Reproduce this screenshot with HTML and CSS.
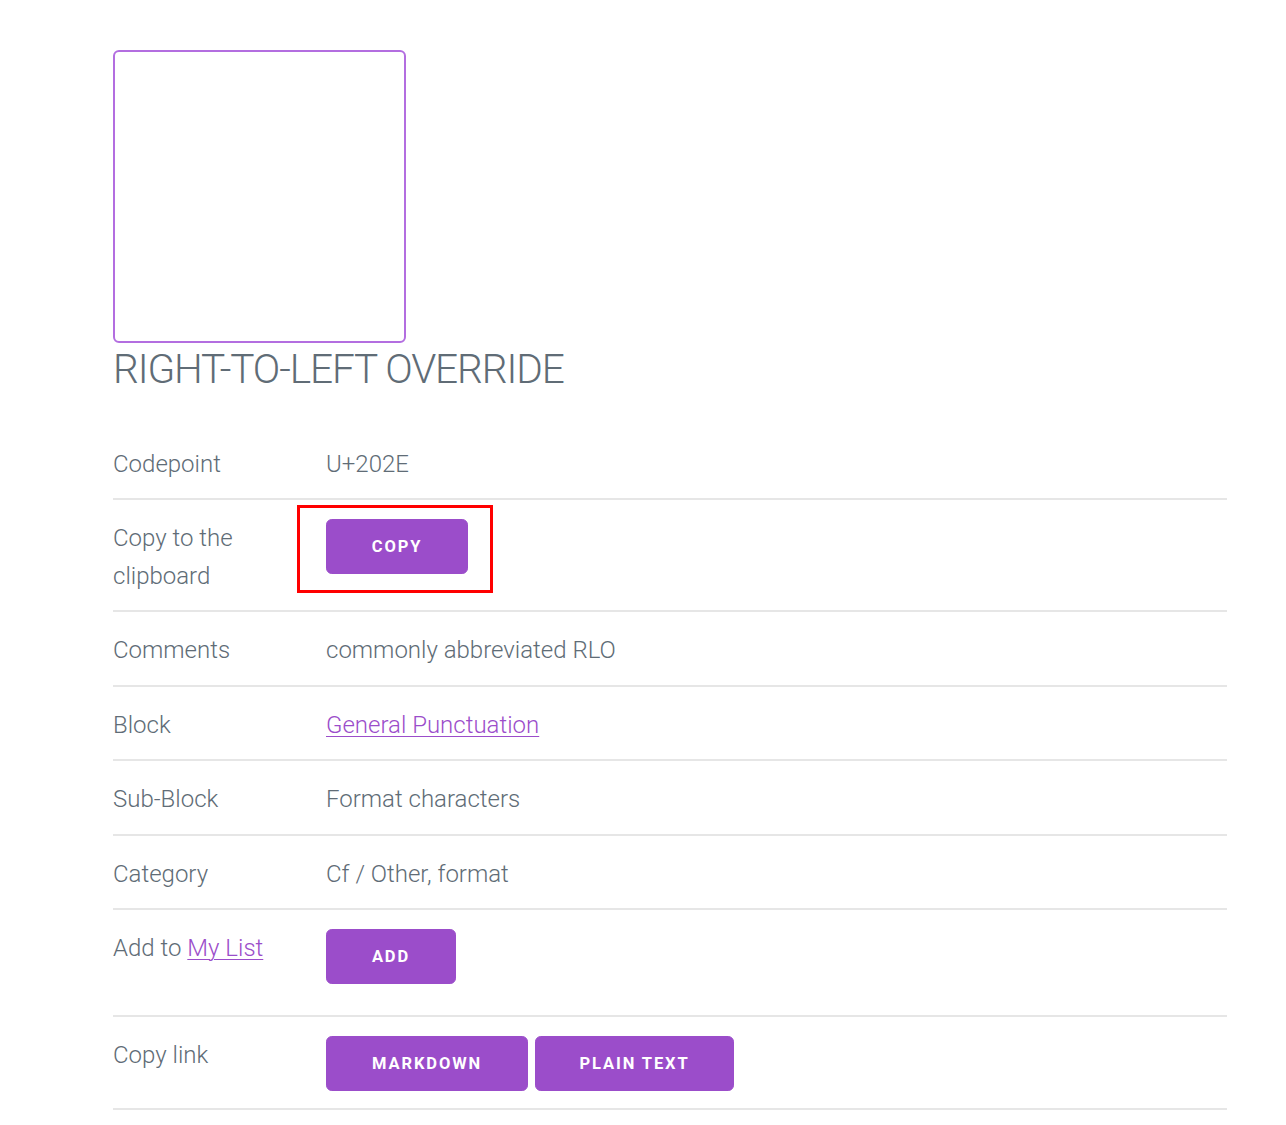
FILE: index.html
```html
<!DOCTYPE html>
<html lang="en">
<head>
<meta charset="utf-8">
<title>RIGHT-TO-LEFT OVERRIDE</title>
<link rel="stylesheet" href="styles.css">
</head>
<body>
<main class="page">
  <div class="glyph-box">&#x202E;</div>
  <h3 class="title">RIGHT-TO-LEFT OVERRIDE</h3>
  <table class="info">
    <tbody>
      <tr>
        <td class="label">Codepoint</td>
        <td class="value">U+202E</td>
      </tr>
      <tr>
        <td class="label">Copy to the clipboard</td>
        <td class="value btn-cell">
          <span class="annot-wrap">
            <button class="btn btn-copy" type="button">Copy</button>
            <span class="annot"></span>
          </span>
        </td>
      </tr>
      <tr>
        <td class="label">Comments</td>
        <td class="value">commonly abbreviated RLO</td>
      </tr>
      <tr>
        <td class="label">Block</td>
        <td class="value"><a href="#">General Punctuation</a></td>
      </tr>
      <tr>
        <td class="label">Sub-Block</td>
        <td class="value">Format characters</td>
      </tr>
      <tr>
        <td class="label">Category</td>
        <td class="value">Cf / Other, format</td>
      </tr>
      <tr>
        <td class="label">Add to <a href="#">My List</a></td>
        <td class="value btn-cell"><button class="btn btn-add" type="button">Add</button></td>
      </tr>
      <tr>
        <td class="label">Copy link</td>
        <td class="value btn-cell"><div class="btn-row"><button class="btn btn-md" type="button">Markdown</button><button class="btn btn-pt" type="button">Plain text</button></div></td>
      </tr>
    </tbody>
  </table>
</main>
</body>
</html>
```

FILE: styles.css
```css
html, body {
  margin: 0;
  padding: 0;
  background: #ffffff;
}
body {
  font-family: Roboto, "Liberation Sans", sans-serif;
  font-weight: 300;
  font-size: 24px;
  line-height: 1.58;
  color: #606c76;
}
.page {
  width: 1114px;
  padding: 50px 0 0 113px;
}
.glyph-box {
  width: 289px;
  height: 289px;
  border: 2px solid #b36ee0;
  border-radius: 6px;
}
.title {
  margin: 0 0 29px 0;
  font-size: 40.6px;
  line-height: 1.3;
  font-weight: 300;
  letter-spacing: -1.1px;
  color: #606c76;
}
.info {
  width: 100%;
  border-collapse: collapse;
  border-spacing: 0;
}
.info td {
  padding: 20px 0 14.5px 0;
  border-bottom: 2px solid #e6e6e6;
  vertical-align: top;
  text-align: left;
}
.info tr:first-child td {
  padding-top: 21px;
}
.info td.btn-cell {
  padding-top: 18px;
}
.info .label {
  width: 191px;
  padding-right: 22px;
}
.info a {
  color: #9b4dca;
  text-decoration: underline;
  text-decoration-thickness: 1px;
  text-underline-offset: 3px;
}
.btn {
  display: inline-block;
  box-sizing: border-box;
  height: 55px;
  padding: 0;
  margin: 1px 0 0 0;
  border: 1px solid #9b4dca;
  border-radius: 5.8px;
  background: #9b4dca;
  color: #ffffff;
  font-family: Roboto, "Liberation Sans", sans-serif;
  font-size: 16.5px;
  font-weight: 700;
  letter-spacing: 1.9px;
  text-transform: uppercase;
  line-height: 54px;
  cursor: pointer;
  vertical-align: top;
}
.btn-copy {
  width: 142px;
}
.btn-add {
  width: 130px;
  margin-bottom: 16.5px;
}
.btn-row {
  display: flex;
  gap: 7px;
  padding-bottom: 2px;
}
.btn-md {
  width: 202px;
}
.btn-pt {
  width: 199px;
}
.annot-wrap {
  position: relative;
  display: inline-block;
  vertical-align: top;
}
.annot {
  position: absolute;
  left: -29px;
  top: -13px;
  width: 190px;
  height: 82px;
  border: 3px solid #ff0000;
  pointer-events: none;
}
```
